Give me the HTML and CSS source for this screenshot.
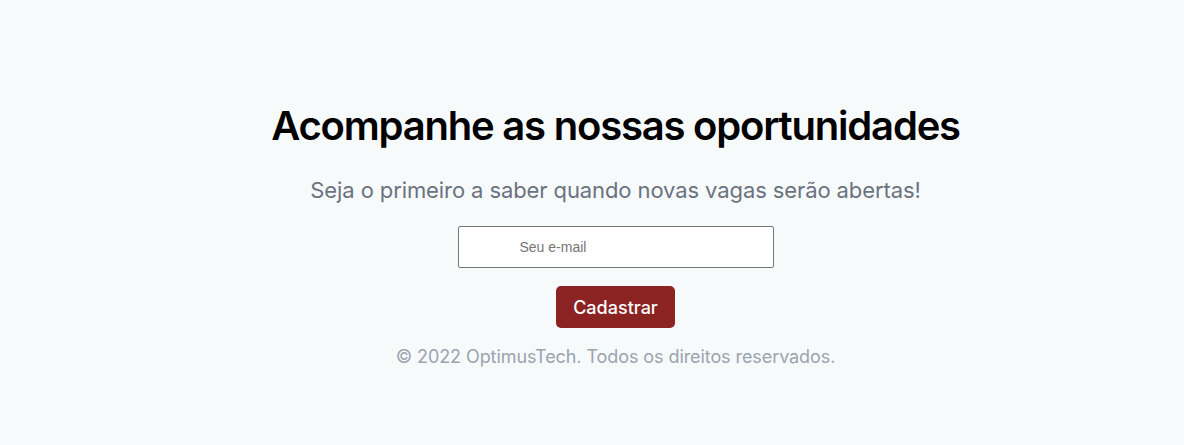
FILE: index.html
```html
<!DOCTYPE html>
<html lang="pt">
<head>
<meta charset="utf-8">
<link rel="stylesheet" href="styles.css">
</head>
<body>
<main class="page">
  <section class="signup">
    <h1 class="title">Acompanhe as nossas oportunidades</h1>
    <p class="subtitle">Seja o primeiro a saber quando novas vagas serão abertas!</p>
    <form class="form">
      <input class="email" type="email" placeholder="Seu e-mail">
      <button class="submit" type="button">Cadastrar</button>
    </form>
    <p class="footer">© 2022 OptimusTech. Todos os direitos reservados.</p>
  </section>
</main>
</body>
</html>
```
FILE: styles.css
```css
html, body {
  margin: 0;
  padding: 0;
  background: #f7fafb;
}
.page {
  height: 445px;
  display: flex;
  justify-content: center;
  padding-left: 47px;
  font-family: Inter, "Noto Sans", sans-serif;
}
.signup {
  display: flex;
  flex-direction: column;
  align-items: center;
  padding-top: 100px;
}
.title {
  margin: 0;
  font-size: 40px;
  font-weight: 600;
  line-height: 52px;
  letter-spacing: -1.2px;
  color: #000;
}
.subtitle {
  margin: 24px 0 0;
  font-size: 22px;
  line-height: 28px;
  letter-spacing: -0.1px;
  color: #6b7280;
}
.form {
  display: flex;
  flex-direction: column;
  align-items: center;
  margin-top: 22px;
}
.email {
  box-sizing: border-box;
  width: 316px;
  height: 42px;
  border: 1px solid #767676;
  border-radius: 2px;
  background: #fff;
  padding: 0 0 0 61px;
  font-family: "Liberation Sans", Arial, sans-serif;
  font-size: 14px;
  color: #333;
}
.email::placeholder {
  color: #757575;
}
.submit {
  margin-top: 18px;
  width: 119px;
  height: 42px;
  border: none;
  border-radius: 5px;
  background: #8b2323;
  color: #fff;
  font-family: Inter, "Noto Sans", sans-serif;
  font-size: 18px;
  font-weight: 500;
}
.footer {
  margin: 17px 0 0;
  font-size: 18px;
  line-height: 24px;
  letter-spacing: -0.08px;
  color: #9ca3af;
}
```
